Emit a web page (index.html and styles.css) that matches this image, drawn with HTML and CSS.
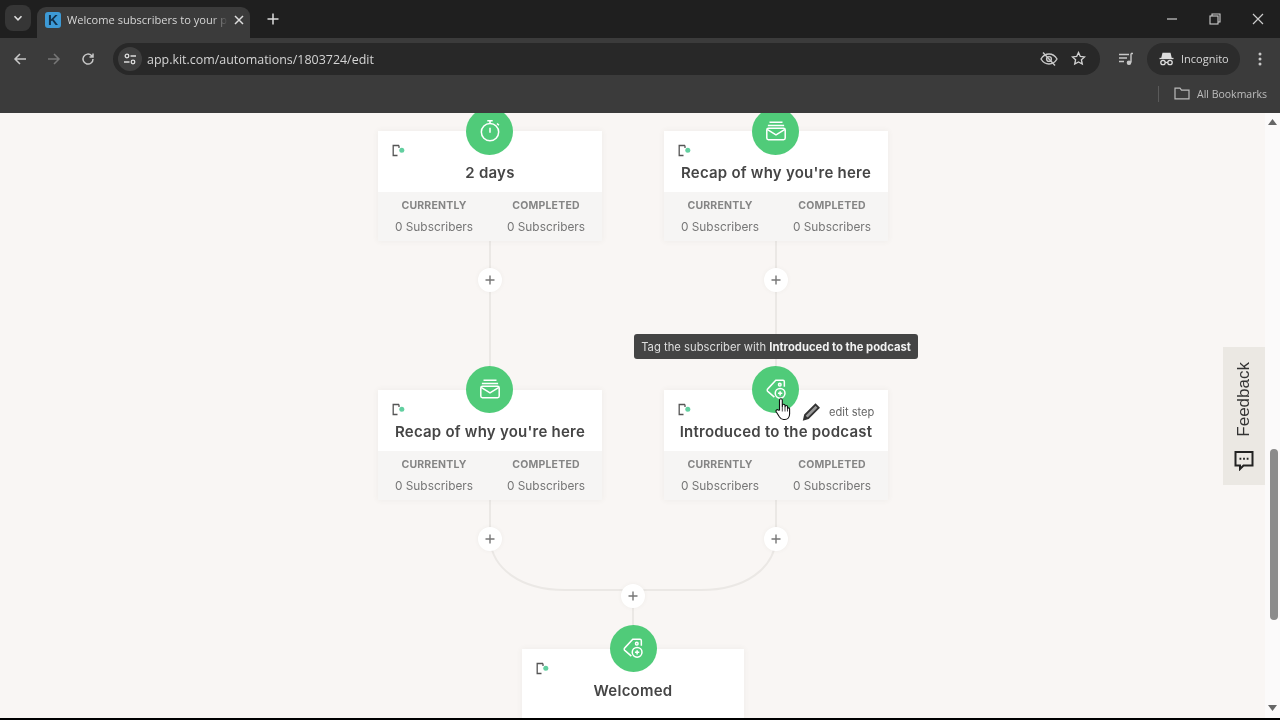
FILE: index.html
```html
<!DOCTYPE html>
<html lang="en">
<head>
<meta charset="utf-8">
<title>Welcome subscribers to your podcast</title>
<link rel="stylesheet" href="styles.css">
</head>
<body>
<svg class="defs" width="0" height="0" aria-hidden="true">
  <symbol id="doc" viewBox="0 0 14 13">
    <path d="M8 1.500H2.200V11.500H6.500" fill="none" stroke="#555" stroke-width="1.3"/>
    <path d="M8 1.500V4" fill="none" stroke="#555" stroke-width="1.3"/>
    <circle cx="10.800" cy="6.200" r="2.500" fill="#62cfa0"/>
  </symbol>
  <symbol id="mail" viewBox="0 1.500 24 24" fill="none" stroke="#fff" stroke-width="1.4">
    <path d="M6 5.500h12M4.500 8.500h15"/>
    <rect x="3.500" y="11" width="17" height="10.500" rx="1.500"/>
    <path d="M3.800 12l8.200 5 8.200-5"/>
  </symbol>
  <symbol id="timer" viewBox="0 .5 24 24" fill="none" stroke="#fff" stroke-width="1.4">
    <circle cx="12" cy="13.500" r="8"/>
    <path d="M9.500 3h5M12 3v2.500M12 9.500v4.500M18.500 5.500l1.700 1.700"/>
  </symbol>
  <symbol id="tag" viewBox="0 1 24 24" fill="none" stroke="#fff" stroke-width="1.4">
    <path d="M10.500 20.500L4.400 15.200a1.600 1.600 0 0 1 0-2.300L11.800 5H18.500a1.200 1.200 0 0 1 1.200 1.200V11"/>
    <circle cx="15.500" cy="9" r="1.200"/>
    <circle cx="15.800" cy="17" r="4.500"/>
    <path d="M15.800 15v4M13.800 17h4"/>
  </symbol>
  <symbol id="plus" viewBox="0 0 10 10">
    <path d="M5 .5v9M.5 5h9" stroke="#777" stroke-width="1.4"/>
  </symbol>
</svg>

<header class="chrome">
  <div class="tabstrip">
    <button class="tab-search"><svg width="10" height="10" viewBox="0 0 10 10"><path d="M1.500 3.200L5 6.800l3.500-3.600" fill="none" stroke="#ddd" stroke-width="1.6"/></svg></button>
    <div class="tab">
      <span class="favicon">K</span>
      <span class="tab-title">Welcome subscribers to your p</span>
      <svg class="tab-close" width="10" height="10" viewBox="0 0 10 10"><path d="M1 1l8 8M9 1l-8 8" stroke="#ddd" stroke-width="1.5"/></svg>
    </div>
    <svg class="new-tab" width="12" height="12" viewBox="0 0 12 12"><path d="M6 .5v11M.5 6h11" stroke="#ddd" stroke-width="1.5"/></svg>
    <div class="win-controls">
      <svg width="12" height="12" viewBox="0 0 12 12"><path d="M1 6h10" stroke="#ccc" stroke-width="1.2"/></svg>
      <svg width="12" height="12" viewBox="0 0 12 12" fill="none" stroke="#ccc" stroke-width="1.1"><rect x="1" y="3" width="8" height="8"/><path d="M3 3V1h8v8H9"/></svg>
      <svg width="12" height="12" viewBox="0 0 12 12"><path d="M1 1l10 10M11 1L1 11" stroke="#ccc" stroke-width="1.2"/></svg>
    </div>
  </div>
  <div class="toolbar">
    <div class="nav">
      <svg width="14" height="14" viewBox="0 0 14 14" fill="none" stroke="#c8c8c8" stroke-width="1.5"><path d="M13 7H2M7 2L2 7l5 5"/></svg>
      <svg width="14" height="14" viewBox="0 0 14 14" fill="none" stroke="#777" stroke-width="1.5"><path d="M1 7h11M7 2l5 5-5 5"/></svg>
      <svg width="14" height="14" viewBox="0 0 14 14" fill="none" stroke="#c8c8c8" stroke-width="1.5"><path d="M12 7a5 5 0 1 1-1.500-3.500L12 5M12 1.500V5H8.500"/></svg>
    </div>
    <div class="omnibox">
      <span class="site-info"><svg width="14" height="14" viewBox="0 0 14 14" fill="none" stroke="#ddd" stroke-width="1.3"><circle cx="4" cy="4" r="1.800"/><path d="M7.500 4H13M1 10h5.500"/><circle cx="10" cy="10" r="1.800"/></svg></span>
      <span class="url">app.kit.com/automations/1803724/edit</span>
      <svg class="omni-icon" width="18" height="16" viewBox="0 0 18 16" fill="none" stroke="#c8c8c8" stroke-width="1.4"><path d="M1 8s3-5 8-5 8 5 8 5-3 5-8 5-8-5-8-5z"/><circle cx="9" cy="8" r="2.400"/><path d="M3 1.500l12 13"/></svg>
      <svg class="omni-icon" width="15" height="15" viewBox="0 0 24 24" fill="none" stroke="#d0d0d0" stroke-width="2.200"><path d="M12 2.500l2.900 6.200 6.800.8-5 4.600 1.300 6.700-6-3.300-6 3.300 1.300-6.700-5-4.600 6.800-.8z"/></svg>
    </div>
    <svg class="media" width="16" height="14" viewBox="0 0 16 14" fill="none" stroke="#c8c8c8" stroke-width="1.4"><path d="M1 2.500h10M1 6h8M1 9.500h5"/><path d="M13 1.500v9"/><circle cx="11" cy="10.800" r="1.600" fill="#c8c8c8"/><path d="M13 1.500h2"/></svg>
    <div class="profile">
      <svg width="15" height="14" viewBox="0 0 15 14" fill="none" stroke="#ddd" stroke-width="1.3"><path d="M4 1.500h7l1 4H3z" fill="#ddd"/><path d="M.5 6.500h14"/><circle cx="4" cy="10.500" r="2.200"/><circle cx="11" cy="10.500" r="2.200"/><path d="M6.200 10.500h2.600"/></svg>
      <span>Incognito</span>
    </div>
    <svg class="kebab" width="4" height="14" viewBox="0 0 4 14" fill="#c8c8c8"><circle cx="2" cy="2" r="1.500"/><circle cx="2" cy="7" r="1.500"/><circle cx="2" cy="12" r="1.500"/></svg>
  </div>
  <div class="bookmarks">
    <span class="bm-divider"></span>
    <svg width="16" height="13" viewBox="0 0 16 13" fill="none" stroke="#bbb" stroke-width="1.2"><path d="M1 11.800V1.200h5l1.500 2H15v8.600z"/></svg>
    <span class="bm-label">All Bookmarks</span>
  </div>
</header>

<main class="viewport">
  <div class="canvas">
    <svg class="wires" width="1265" height="605" viewBox="0 0 1265 605" fill="none" stroke="#ebe8e5" stroke-width="2">
      <path d="M490 128V270M776 128V270M490 386V426M776 386V426M633 477V540"/>
      <path d="M490 426C492 455 520 477 565 477H633M776 426C774 455 746 477 701 477H633"/>
    </svg>

    <section class="card col-a row-1">
      <svg class="doc"><use href="#doc"/></svg>
      <h3>2 days</h3>
      <div class="stats"><div><b>CURRENTLY</b><span>0 Subscribers</span></div><div><b>COMPLETED</b><span>0 Subscribers</span></div></div>
    </section>
    <section class="card col-b row-1">
      <svg class="doc"><use href="#doc"/></svg>
      <h3>Recap of why you're here</h3>
      <div class="stats"><div><b>CURRENTLY</b><span>0 Subscribers</span></div><div><b>COMPLETED</b><span>0 Subscribers</span></div></div>
    </section>
    <section class="card col-a row-2">
      <svg class="doc"><use href="#doc"/></svg>
      <h3>Recap of why you're here</h3>
      <div class="stats"><div><b>CURRENTLY</b><span>0 Subscribers</span></div><div><b>COMPLETED</b><span>0 Subscribers</span></div></div>
    </section>
    <section class="card col-b row-2">
      <svg class="doc"><use href="#doc"/></svg>
      <h3>Introduced to the podcast</h3>
      <div class="stats"><div><b>CURRENTLY</b><span>0 Subscribers</span></div><div><b>COMPLETED</b><span>0 Subscribers</span></div></div>
      <div class="edit-step">
        <svg width="20" height="20" viewBox="0 0 20 20"><path d="M3 17.500l1-4.500L14.500 2.500l3.200 3.200L7.200 16.200z" fill="#999" stroke="#333" stroke-width="1.800"/><path d="M3 17.500l1-4.500 3.200 3.200z" fill="#333"/></svg>
        <span>edit step</span>
      </div>
    </section>
    <section class="card col-c row-3">
      <svg class="doc"><use href="#doc"/></svg>
      <h3>Welcomed</h3>
    </section>

    <div class="step cx-a cy-1"><svg><use href="#timer"/></svg></div>
    <div class="step cx-b cy-1"><svg><use href="#mail"/></svg></div>
    <div class="step cx-a cy-2"><svg><use href="#mail"/></svg></div>
    <div class="step cx-b cy-2"><svg><use href="#tag"/></svg></div>
    <div class="step cx-c cy-3"><svg><use href="#tag"/></svg></div>

    <button class="add ax-a ay-1"><svg><use href="#plus"/></svg></button>
    <button class="add ax-b ay-1"><svg><use href="#plus"/></svg></button>
    <button class="add ax-a ay-2"><svg><use href="#plus"/></svg></button>
    <button class="add ax-b ay-2"><svg><use href="#plus"/></svg></button>
    <button class="add ax-c ay-3"><svg><use href="#plus"/></svg></button>

    <div class="tooltip">Tag the subscriber with <b>Introduced to the podcast</b></div>

    <svg class="hand" width="16" height="24" viewBox="0 0 16 24"><path d="M4.500 13V3.200a1.400 1.400 0 0 1 2.800 0V10l.1-1.600a1.300 1.300 0 0 1 2.600.2V10.500l.1-.9a1.200 1.200 0 0 1 2.400.3v1.600a1.100 1.100 0 0 1 2.100.4V17c0 3-1.800 5.500-4.800 5.500H8.500c-2 0-3-1-4-2.500L1.200 14.800c-.9-1.500 1-2.900 2.200-1.600z" fill="#fff" stroke="#111" stroke-width="1.100"/><path d="M7.300 10v4.500M10 10.500v4M12.500 11v3.500" stroke="#111" stroke-width=".8"/></svg>

    <aside class="feedback">
      <span class="feedback-text">Feedback</span>
      <svg width="20" height="21" viewBox="0 0 20 21" fill="none" stroke="#222" stroke-width="2"><path d="M1.500 2h17v13.500H9.500l-3.500 3.500V15.500H1.500z"/><path d="M5.500 8.700h1.800M9.100 8.700h1.800M12.700 8.700h1.800"/></svg>
    </aside>
  </div>
  <div class="scrollbar">
    <svg width="9" height="6" viewBox="0 0 9 6"><path d="M4.500 0L9 6H0z" fill="#666"/></svg>
    <div class="track"><div class="thumb"></div></div>
    <svg width="9" height="6" viewBox="0 0 9 6"><path d="M4.500 6L9 0H0z" fill="#666"/></svg>
  </div>
</main>
<div class="bottom-edge"></div>
</body>
</html>
```
FILE: styles.css
```css
* { box-sizing: border-box; }
html, body { margin: 0; height: 100%; overflow: hidden; }
body { display: flex; flex-direction: column; width: 1280px; height: 720px; background: #000; font-family: Inter, "Liberation Sans", sans-serif; }
.defs { position: absolute; }
button { border: 0; padding: 0; background: none; }

.chrome { flex: none; display: flex; flex-direction: column; font-family: "Open Sans", "Liberation Sans", sans-serif; filter: blur(.35px); }
.tabstrip { height: 38px; background: #1f1f1f; display: flex; align-items: flex-end; padding-left: 5px; position: relative; }
.tab-search { width: 26px; height: 26px; margin-bottom: 7px; border-radius: 8px; background: #363636; display: flex; align-items: center; justify-content: center; }
.tab { width: 213px; height: 31px; margin-left: 6px; padding: 0 6px 6px 8px; background: #3b3b3b; border-radius: 9px 9px 0 0; display: flex; align-items: center; gap: 6px; }
.favicon { width: 16px; height: 16px; flex: none; background: #3d9ad6; border-radius: 3px; color: #12304a; font: 700 14px/16px "Liberation Sans", sans-serif; text-align: center; }
.tab-title { flex: 1; min-width: 0; white-space: nowrap; overflow: hidden; font-size: 11.100px; color: #d6d6d6; -webkit-mask-image: linear-gradient(90deg, #000 90%, transparent); mask-image: linear-gradient(90deg, #000 90%, transparent); }
.tab-close { flex: none; }
.new-tab { margin: 0 0 13px 17px; }
.win-controls { margin-left: auto; display: flex; align-items: center; gap: 31px; padding: 0 16px 13px 0; }

.toolbar { height: 41px; background: #3b3b3b; display: flex; align-items: center; padding: 0 14px 0 13px; }
.nav { display: flex; gap: 20px; width: 100px; }
.omnibox { width: 987px; height: 32px; background: #282828; border-radius: 16px; display: flex; align-items: center; padding-left: 5px; }
.site-info { width: 24px; height: 24px; border-radius: 50%; background: #3f3f3f; display: flex; align-items: center; justify-content: center; }
.url { margin-left: 5px; padding-top: 1px; font-size: 12.450px; color: #d4d4d4; flex: 1; }
.omni-icon { margin-right: 13px; flex: none; }
.omni-icon:last-child { margin-right: 14px; }
.media { margin-left: 18px; }
.profile { width: 93px; height: 32px; margin-left: 13px; background: #2c2c2c; border-radius: 16px; display: flex; align-items: center; gap: 7px; padding-left: 12px; font-size: 11px; color: #d8d8d8; }
.kebab { margin-left: 18px; }

.bookmarks { height: 34px; background: #3b3b3b; display: flex; align-items: center; justify-content: flex-end; padding: 0 13px 5px 0; gap: 7px; }
.bm-divider { width: 1px; height: 16px; background: #5a5a5a; margin-right: 8px; }
.bm-label { font-size: 10.500px; color: #bdbdbd; }

.viewport { flex: none; height: 605px; display: flex; background: #f9f6f4; filter: blur(.35px); }
.canvas { position: relative; width: 1265px; height: 605px; overflow: hidden; }
.wires { position: absolute; left: 0; top: 0; }

.card { position: absolute; width: 224px; background: #fff; box-shadow: 0 0 6px rgba(90, 80, 70, .07); text-align: center; }
.col-a { left: 378px; } .col-b { left: 664px; } .col-c { left: 522px; width: 222px; }
.row-1 { top: 18px; } .row-2 { top: 277px; } .row-3 { top: 536px; height: 70px; }
.doc { position: absolute; left: 13px; top: 13px; width: 14px; height: 13px; }
.card h3 { margin: 0; padding-top: 32px; height: 61px; font-size: 15px; line-height: 20px; font-weight: 600; color: #454545; letter-spacing: .23px; }
.stats { height: 49px; background: #f6f5f4; display: flex; }
.stats div { flex: 1; display: flex; flex-direction: column; align-items: center; padding-top: 7px; }
.stats b { font-size: 10.500px; line-height: 14px; font-weight: 700; color: #858585; letter-spacing: .2px; }
.stats span { margin-top: 6px; font-size: 11.850px; line-height: 16px; color: #767676; }

.step { position: absolute; width: 47px; height: 47px; border-radius: 50%; background: #50cb79; display: flex; align-items: center; justify-content: center; }
.step svg { width: 26px; height: 26px; }
.cx-a { left: 466px; } .cx-b { left: 752px; } .cx-c { left: 609.500px; }
.cy-1 { top: -5.500px; } .cy-2 { top: 252.500px; } .cy-3 { top: 511.500px; }

.add { position: absolute; width: 24px; height: 24px; border-radius: 50%; background: #fff; box-shadow: 0 0 4px rgba(90, 80, 70, .06); display: flex; align-items: center; justify-content: center; }
.add svg { width: 10px; height: 10px; }
.ax-a { left: 478px; } .ax-b { left: 764px; } .ax-c { left: 621px; }
.ay-1 { top: 155px; } .ay-2 { top: 414px; } .ay-3 { top: 471px; }

.tooltip { position: absolute; left: 634px; top: 221px; width: 284px; height: 25px; background: #444; border-radius: 3px; color: #dedede; font-size: 11.250px; line-height: 26px; text-align: center; white-space: nowrap; }
.tooltip b { font-weight: 700; color: #f2f2f2; }

.edit-step { position: absolute; left: 134px; top: 10px; width: 82px; height: 24px; background: #fff; display: flex; align-items: center; gap: 8px; padding-left: 3px; font-size: 11.100px; color: #666; }
.hand { position: absolute; left: 775px; top: 284px; }

.feedback { position: absolute; left: 1223px; top: 234px; width: 42px; height: 138px; background: #ebe8e3; display: flex; flex-direction: column; align-items: center; padding-top: 15px; gap: 13px; }
.feedback-text { writing-mode: vertical-rl; transform: rotate(180deg); font: 17px/20px "Liberation Sans", sans-serif; color: #333; }

.scrollbar { width: 15px; height: 605px; background: #fbfafa; display: flex; flex-direction: column; align-items: center; padding: 6px 0 7px; }
.track { flex: 1; width: 100%; position: relative; }
.thumb { position: absolute; left: 5px; right: 2px; top: 324px; height: 171px; background: #8b8b8b; border-radius: 4px; }
.bottom-edge { flex: 1; background: #000; }
```
